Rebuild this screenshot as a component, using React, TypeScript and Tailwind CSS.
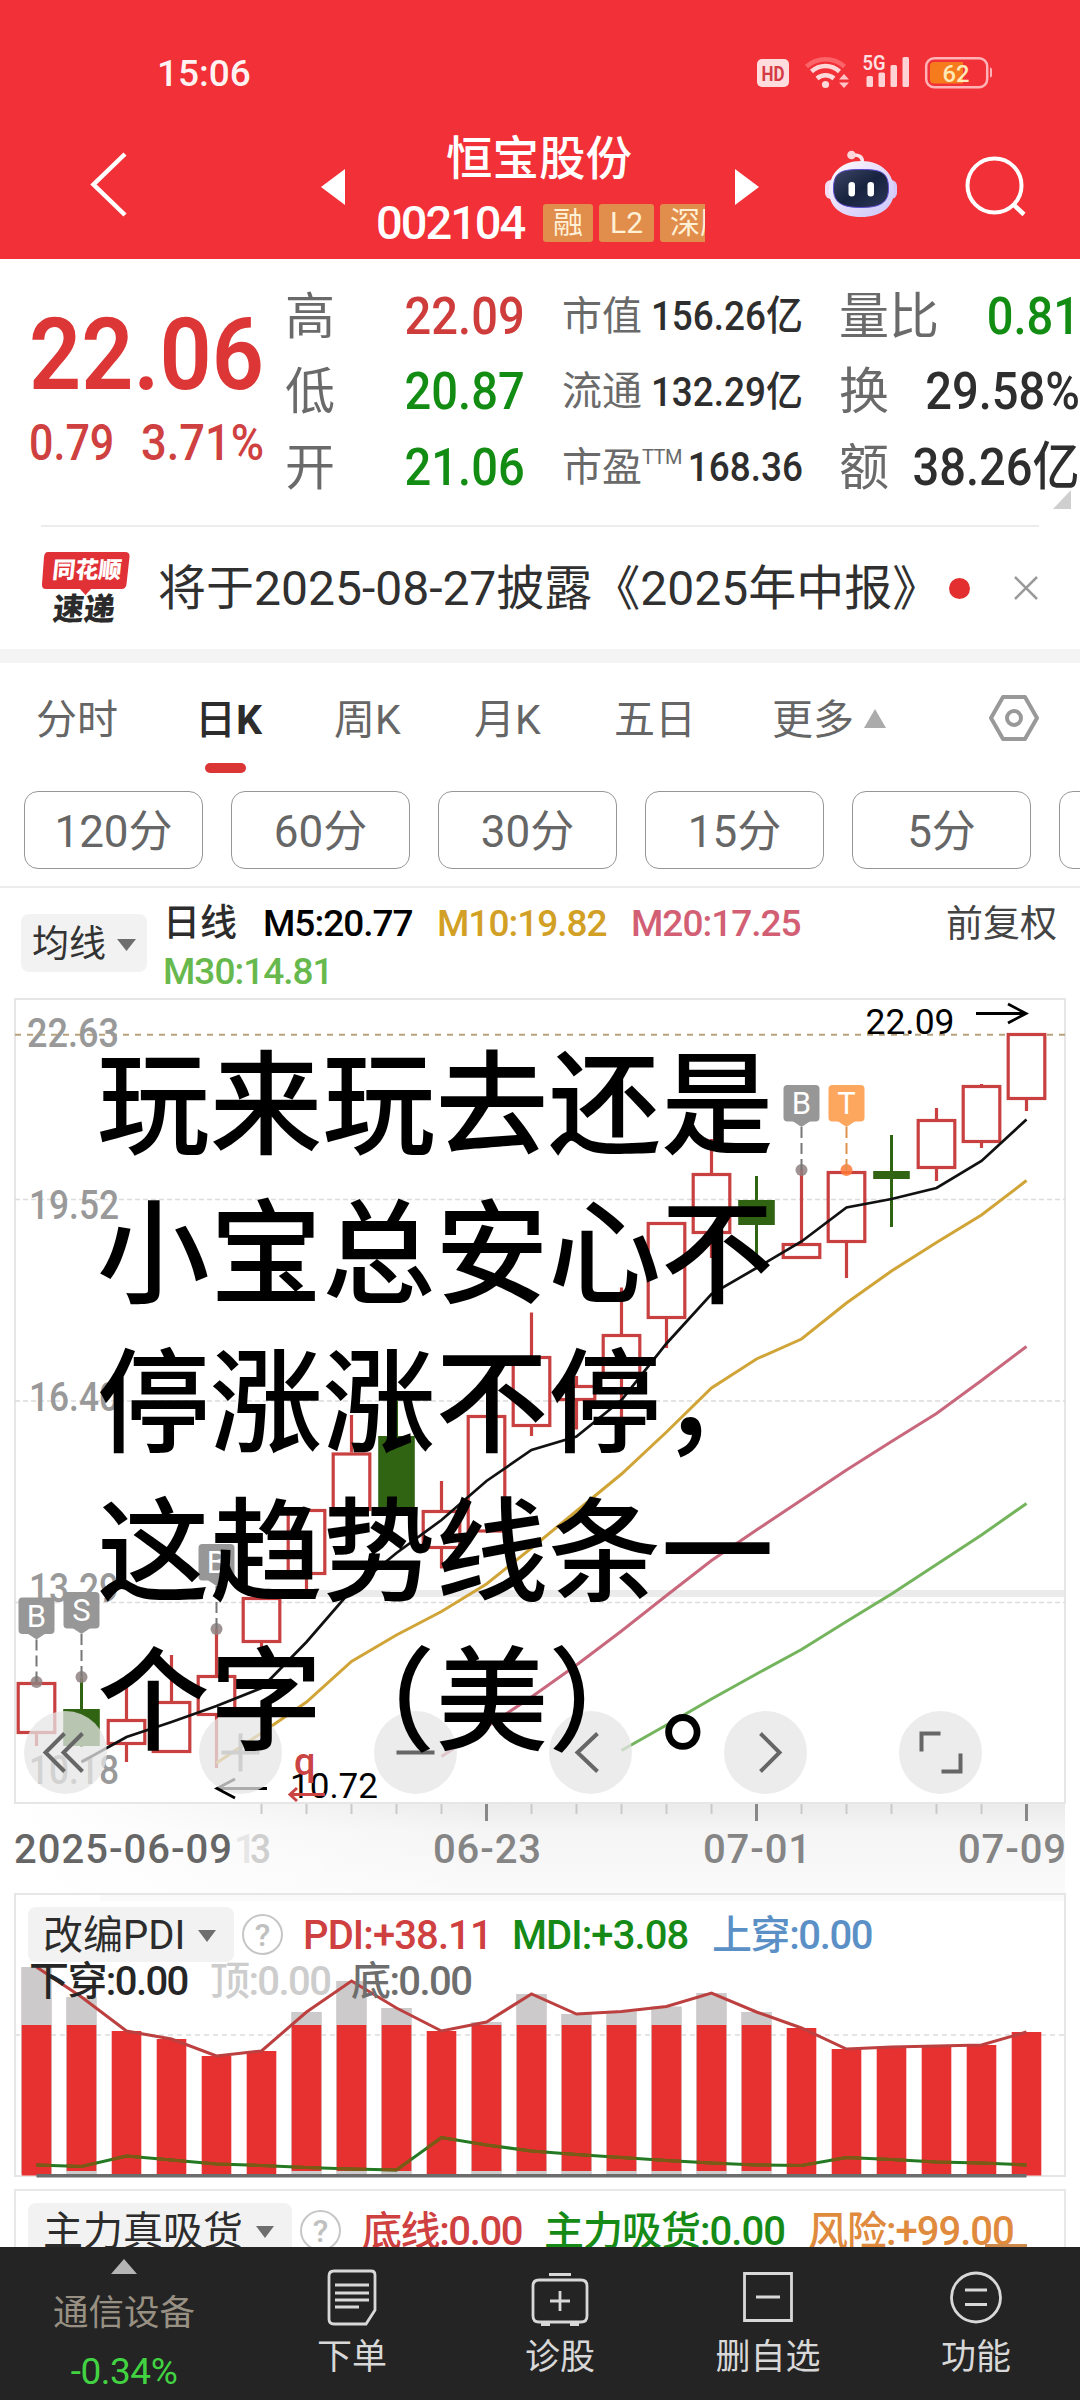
import type { ReactNode } from "react";

type Candle = { top: number; bottom: number; high: number; low: number; up: boolean };

const X0 = 36.5;
const STEP = 45;
const cx = (i: number) => X0 + i * STEP;

// [top, bottom, high, low, up]
const CANDLES: Candle[] = (
  [
    [1682, 1734, 1682, 1746, 1],
    [1709, 1746, 1677.5, 1747, 0],
    [1719, 1745, 1683, 1762, 1],
    [1701, 1753, 1655, 1753, 1],
    [1675, 1716, 1629, 1768, 1],
    [1597, 1643, 1597, 1650, 1],
    [1509, 1575, 1509, 1590, 1],
    [1452.5, 1511, 1415, 1511, 1],
    [1436, 1511, 1401, 1511, 0],
    [1510, 1549, 1481, 1568.5, 1],
    [1415, 1532.5, 1415, 1532.5, 1],
    [1356, 1427, 1312.5, 1436, 1],
    [1385, 1401, 1376, 1429.5, 1],
    [1334, 1378, 1287.5, 1417, 1],
    [1222, 1319, 1222, 1348, 1],
    [1173, 1234, 1139, 1258, 1],
    [1200, 1225, 1176, 1255, 0],
    [1243, 1259, 1169, 1259, 1],
    [1171, 1243, 1171, 1278, 1],
    [1171, 1179, 1135, 1227, 0],
    [1119, 1169, 1108, 1181, 1],
    [1085, 1143, 1084, 1148, 1],
    [1033, 1100, 1033, 1111, 1],
  ] as number[][]
).map(([top, bottom, high, low, up]) => ({ top, bottom, high, low, up: up === 1 }));

const MA5 = [1762, 1737, 1722, 1706, 1688, 1642, 1590, 1553, 1520, 1481, 1450, 1436.5, 1400, 1343.5, 1294, 1268, 1241.5, 1207.5, 1199, 1188, 1161, 1119.5];
const MA10 = [1763, 1733, 1702, 1661.5, 1635, 1611.5, 1584, 1548, 1511, 1474, 1432, 1388, 1359, 1339, 1303, 1271, 1242.5, 1215, 1180.5];
const MA20 = [1756.5, 1727, 1697, 1665, 1631, 1595.5, 1560.5, 1530, 1500, 1470, 1441.5, 1413.5, 1380.5, 1346.5];
const MA30 = [1750.5, 1725, 1699, 1674, 1649.5, 1621.5, 1594, 1564.5, 1535, 1503.5];

const PDI = [1967, 1997, 2031, 2039, 2056, 2051, 2012, 1981, 2008, 2031, 2022, 1994, 2014, 2011.5, 2006.5, 1993, 2012, 2028, 2049, 2047, 2046, 2045, 2032];
const MDI = [2165, 2166.5, 2156, 2160, 2164, 2165.5, 2167.5, 2169, 2170, 2137.5, 2145, 2151, 2154.5, 2157.5, 2160.5, 2163, 2165, 2165.5, 2157.5, 2159.5, 2162, 2163, 2165];
const PDI_CAP = 2025;

const line = (ys: number[], from = 0) => ys.map((y, i) => `${cx(i + from)},${y}`).join(" ");

const NOTE = ["玩来玩去还是", "小宝总安心不", "停涨涨不停，", "这趋势线条一", "个字（美）。"];

const QUOTES = [
  [
    { label: "高", value: "22.09", color: "text-[#cf3c3c]" },
    { label: "低", value: "20.87", color: "text-[#128c12]" },
    { label: "开", value: "21.06", color: "text-[#128c12]" },
  ],
  [
    { label: "量比", value: "0.81", color: "text-[#128c12]" },
    { label: "换", value: "29.58%", color: "text-[#2e2e2e]" },
    { label: "额", value: "38.26亿", color: "text-[#2e2e2e]" },
  ],
];

const CAPS = [
  { label: "市值", value: "156.26亿" },
  { label: "流通", value: "132.29亿" },
  { label: "市盈", value: "168.36", sup: "TTM" },
];

function StatusBar() {
  return (
    <div className="flex h-[116px] items-start pl-[157px]">
      <span className="mt-[55px] w-[600px] text-[37px] leading-none font-medium text-white/95">15:06</span>
      <svg className="mt-[50px]" width="240" height="44" viewBox="757 50 240 44">
        <rect x="757" y="59" width="32" height="28" rx="5" fill="#ffdcde" />
        <text x="761.5" y="81" fontSize="21" fontWeight="700" textLength="23" lengthAdjust="spacingAndGlyphs" fill="#d43a44">HD</text>
        <g fill="none" stroke="#ffd8da">
          <path d="M806.500 66.500a28.500 28.500 0 0 1 38 0" stroke="#fb6469" strokeWidth="4.500" />
          <path d="M811.500 70.500a20.500 20.500 0 0 1 28 0" strokeWidth="4.500" transform="translate(0 1)" />
          <path d="M817 78.500a13 13 0 0 1 17 0" strokeWidth="4.500" />
        </g>
        <circle cx="825.500" cy="84.500" r="3.600" fill="#ffd8da" />
        <path d="M839 79.500l5-5.500 5 5.500zM839 82.500l5 5.500 5-5.500z" fill="#ffc4c7" />
        <text x="862.500" y="70" fontSize="21" fontWeight="600" textLength="23" lengthAdjust="spacingAndGlyphs" fill="#ffe0e2">5G</text>
        <g fill="#ffd3d6">
          <rect x="866.500" y="76" width="6.500" height="11" rx="1.500" />
          <rect x="878.500" y="72.500" width="6.500" height="14.500" rx="1.500" />
          <rect x="890.500" y="65" width="6.500" height="22" rx="1.500" />
          <rect x="902.500" y="57" width="6.500" height="30" rx="1.500" />
        </g>
        <rect x="926.200" y="58.200" width="61" height="29" rx="8" fill="none" stroke="#ffb3b6" strokeWidth="2.500" />
        <path d="M934 62h29v21.500h-29q-4 0-4-4v-13.500q0-4 4-4z" fill="#f57b1d" />
        <path d="M990 67.500q2 0 2 2v6q0 2-2 2z" fill="#ffb3b6" />
        <text x="942.500" y="81.500" fontSize="24" fontWeight="500" textLength="27" lengthAdjust="spacingAndGlyphs" fill="#ffe9b8">62</text>
      </svg>
    </div>
  );
}

function Robot() {
  return (
    <svg width="74" height="70" viewBox="824 149 74 70">
      <defs>
        <linearGradient id="shell" x1="0" y1="0" x2="1" y2="1">
          <stop offset="0" stopColor="#ffffff" />
          <stop offset="0.5" stopColor="#e6dcfb" />
          <stop offset="1" stopColor="#c9c6fa" />
        </linearGradient>
        <linearGradient id="visor" x1="0" y1="0" x2="1" y2="1">
          <stop offset="0" stopColor="#3d4766" />
          <stop offset="0.500" stopColor="#18233f" />
          <stop offset="1" stopColor="#2c3658" />
        </linearGradient>
      </defs>
      <path d="M852 155q11-1 10.500 8" fill="none" stroke="#ffe3e8" strokeWidth="3.500" />
      <circle cx="851.500" cy="155" r="4.300" fill="#ffd6dc" />
      <rect x="825" y="180" width="12" height="19" rx="6" fill="#f6dcf0" />
      <rect x="885" y="180" width="12" height="19" rx="6" fill="#d6c8f8" />
      <path d="M861 161c21 0 33 13 33 30 0 16-13 26-33 26s-32-10-32-26c0-17 12-30 32-30z" fill="url(#shell)" />
      <path d="M861 169.500c19 0 27.500 2 27.500 19 0 14-8 19-27.500 19s-27.500-5-27.500-19c0-17 8.500-19 27.500-19z" fill="url(#visor)" stroke="#5b4bd0" strokeWidth="1" />
      <rect x="848.500" y="182" width="6.500" height="14.500" rx="3.200" fill="#fff" />
      <rect x="867.500" y="182" width="6.500" height="14.500" rx="3.200" fill="#fff" />
    </svg>
  );
}

function Tag({ children }: { children: ReactNode }) {
  return (
    <span className="flex h-[38px] shrink-0 items-center justify-center rounded-[3px] bg-[#e18d4c] px-[10px] text-[30px] leading-none text-[#fff0d6]">
      {children}
    </span>
  );
}

function Header() {
  return (
    <header className="h-[259px] bg-[#f23037]">
      <StatusBar />
      <div className="flex h-[142px] items-start">
        <svg className="mt-[34px] ml-[87px]" width="44" height="70" viewBox="86 150 44 70">
          <path d="M124 154L92.500 184.500 124 215" fill="none" stroke="#fff" strokeWidth="4.500" />
        </svg>
        <svg className="mt-[53px] ml-[190px]" width="24" height="36" viewBox="0 0 24 36">
          <path d="M24 0v36L0 18z" fill="#fff" />
        </svg>
        <div className="ml-[31px] w-[330px]">
          <div className="mt-[20px] ml-[70px] text-[46.500px] leading-none font-medium text-white">恒宝股份</div>
          <div className="mt-[18px] flex h-[44px] items-center">
            <span className="w-[167px] text-[47px] leading-none font-medium tracking-[-2px] text-white">002104</span>
            <div className="flex w-[162px] gap-[6px] overflow-hidden">
              <Tag>融</Tag>
              <Tag>
                <span className="px-[1px]">L2</span>
              </Tag>
              <Tag>深股通</Tag>
            </div>
          </div>
        </div>
        <svg className="mt-[53px] ml-[29px]" width="24" height="36" viewBox="0 0 24 36">
          <path d="M0 0v36l24-18z" fill="#fff" />
        </svg>
        <div className="mt-[33px] ml-[65px]">
          <Robot />
        </div>
        <svg className="mt-[38px] ml-[65px]" width="66" height="66" viewBox="963 154 66 66">
          <circle cx="994.500" cy="185.500" r="27" fill="none" stroke="#fff" strokeWidth="4" />
          <path d="M1013 204l11 10.500" stroke="#fff" strokeWidth="4.500" />
        </svg>
      </div>
    </header>
  );
}

function QuoteColumn({ rows, className }: { rows: typeof QUOTES[number]; className: string }) {
  return (
    <div className={className}>
      {rows.map(r => (
        <div key={r.label} className="flex h-[75.500px] items-center justify-between whitespace-nowrap">
          <span className="text-[50px] leading-none text-[#6a6a6a]">{r.label}</span>
          <span className={`origin-right scale-x-[0.905] text-[52px] leading-none font-medium ${r.color}`}>{r.value}</span>
        </div>
      ))}
    </div>
  );
}

function Quote() {
  return (
    <section className="relative flex h-[266px] pt-[20px]">
      <div className="w-[285px] pl-[29px] text-[#dc3636]">
        <div className="mt-[25px] w-[256px] origin-left scale-x-[0.905] text-[101px] leading-none font-semibold">22.06</div>
        <div className="mt-[13px] flex text-[50px] leading-none font-medium whitespace-nowrap text-[#cf4040]">
          <span className="w-[112px] origin-left scale-x-[0.86]">0.79</span>
          <span className="origin-left scale-x-[0.905]">3.71%</span>
        </div>
      </div>
      <QuoteColumn rows={QUOTES[0]} className="w-[240px]" />
      <div className="ml-[37px] w-[241px]">
        {CAPS.map(c => (
          <div key={c.label} className="flex h-[75.500px] items-center justify-between whitespace-nowrap">
            <span className="w-[60px] text-[40px] leading-none text-[#6a6a6a]">
              {c.label}
              {c.sup && <span className="relative -top-[17px] text-[20px] tracking-[-0.500px]">{c.sup}</span>}
            </span>
            <span className="origin-right scale-x-[0.9] text-[41px] leading-none font-medium text-[#2e2e2e]">{c.value}</span>
          </div>
        ))}
      </div>
      <QuoteColumn rows={QUOTES[1]} className="ml-[36px] w-[241px]" />
      <svg className="absolute right-[9px] bottom-[16px]" width="18" height="19" viewBox="0 0 18 19">
        <path d="M18 0v19H0z" fill="#cfcfcf" />
      </svg>
    </section>
  );
}

function News() {
  return (
    <section className="mx-[41px] flex h-[124px] items-center border-t-2 border-[#ececec]">
      <div className="relative h-[76px] w-[89px]">
        <svg className="absolute inset-0" width="89" height="76" viewBox="41 549 89 76">
          <path d="M48 551h77q5 0 4.500 5l-3 27q-.500 5-5 5H91l-5.500 6-5.500-6H46q-4.500 0-4-5l2-27q.500-5 4-5z" fill="#e03236" />
        </svg>
        <div className="relative -skew-x-6 pt-[9px] pl-[12px] text-[23px] leading-none font-black text-white">同花顺</div>
        <div className="relative mt-[12px] ml-[12px] -skew-x-6 text-[31px] leading-none font-black whitespace-nowrap text-[#2b2b2b]">速递</div>
      </div>
      <span className="mt-[2px] ml-[28px] text-[48px] leading-none whitespace-nowrap text-[#303030]">将于2025-08-27披露《2025年中报》</span>
      <span className="mt-[1px] ml-[9px] size-[21px] shrink-0 rounded-full bg-[#e32f2f]" />
      <svg className="ml-auto" width="26" height="26" viewBox="0 0 26 26">
        <path d="M2 2l22 22M24 2L2 24" stroke="#9a9a9a" strokeWidth="2.500" />
      </svg>
    </section>
  );
}

function Tabs() {
  return (
    <>
      <nav className="flex h-[128px] pt-[37px] text-[41px] leading-none whitespace-nowrap text-[#666]">
        <span className="ml-[36px] w-[159px]">分时</span>
        <span className="flex w-[139px] flex-col font-medium text-[#2c2c2c]">
          <span>
            日<b>K</b>
          </span>
          <i className="mt-[22px] ml-[10px] h-[10px] w-[41px] rounded-full bg-[#dc3535]" />
        </span>
        <span className="w-[140px]">周K</span>
        <span className="w-[140px]">月K</span>
        <span className="w-[158px]">五日</span>
        <span>更多</span>
        <svg className="mt-[9px] ml-[10px]" width="22" height="19" viewBox="0 0 22 19">
          <path d="M11 0l11 19H0z" fill="#ababab" />
        </svg>
        <svg className="-mt-[6px] ml-auto mr-[41px]" width="50" height="48" viewBox="989 694 50 48">
          <path d="M1003 697h22l12 21-12 21h-22l-12-21z" fill="none" stroke="#999" strokeWidth="4" strokeLinejoin="round" />
          <circle cx="1014" cy="718" r="7" fill="none" stroke="#999" strokeWidth="4" />
        </svg>
      </nav>
      <div className="flex h-[97px] gap-[28px] overflow-hidden border-b-2 border-[#ececec] pl-[24px]">
        {["120分", "60分", "30分", "15分", "5分", "1分"].map(t => (
          <button key={t} className="h-[78px] w-[179px] shrink-0 rounded-[14px] border-[1.500px] border-[#969696] pt-[3px] text-[44px] leading-none text-[#666]">
            {t}
          </button>
        ))}
      </div>
    </>
  );
}

function Legend() {
  return (
    <div className="flex h-[111px] pl-[21px] text-[37px] leading-none">
      <button className="mt-[26px] flex h-[58px] w-[126px] items-center gap-[11px] rounded-[8px] bg-[#f2f2f2] pt-[3px] pl-[11px] leading-none text-[#333]">
        均线
        <svg width="19" height="12" viewBox="0 0 19 12">
          <path d="M0 0h19l-9.500 12z" fill="#6e6e6e" />
        </svg>
      </button>
      <div className="mt-[17px] ml-[16px] flex w-[760px] flex-wrap content-start gap-y-[11px] font-medium tracking-[-1px]">
        <span className="w-[100px] tracking-normal text-[#2c2c2c]">日线</span>
        <span className="w-[174px] text-black">M5:20.77</span>
        <span className="w-[194px] text-[#d2a024]">M10:19.82</span>
        <span className="w-[260px] text-[#d35f75]">M20:17.25</span>
        <span className="text-[#67b94d]">M30:14.81</span>
      </div>
      <span className="mt-[18px] ml-[23px] text-[#444]">前复权</span>
    </div>
  );
}

function Marker({ i, y, dot, label, color = "#979797", dotColor = "#8f8080" }: { i: number; y: number; dot: number; label: string; color?: string; dotColor?: string }) {
  const x = cx(i);
  return (
    <g>
      <circle cx={x} cy={dot} r="6" fill={dotColor} opacity="0.85" />
      <path d={`M${x} ${y + 42}V${dot}`} stroke={color === "#979797" ? "#777" : "#e0924c"} strokeWidth="2" strokeDasharray="11 5" />
      <rect x={x - 18} y={y} width="36" height="36.500" rx="4" fill={color} />
      <path d={`M${x - 9} ${y + 36}h18l-9 6z`} fill={color} />
      <text x={x} y={y + 29} fontSize="31" textAnchor="middle" fill="#fff">{label}</text>
    </g>
  );
}

function Price({ y, children }: { y: number; children: string }) {
  // a leading 1 carries more side bearing
  const narrow = children.startsWith("1");
  return (
    <text x={narrow ? 29 : 27} y={y} fontSize="40" fontWeight="500" textLength={narrow ? 90 : 92} lengthAdjust="spacingAndGlyphs" fill="#999">
      {children}
    </text>
  );
}

function PriceChart() {
  return (
    <svg className="block" width="1080" height="895" viewBox="0 998 1080 895">
      <defs>
        <linearGradient id="stripV" x1="0" y1="0" x2="0" y2="1">
          <stop offset="0" stopColor="#ebebeb" />
          <stop offset="0.300" stopColor="#f5f5f5" />
          <stop offset="1" stopColor="#fafafa" />
        </linearGradient>
        <linearGradient id="stripH" x1="0" y1="0" x2="1" y2="0">
          <stop offset="0" stopColor="#fff" />
          <stop offset="0.060" stopColor="#fff" stopOpacity="0.900" />
          <stop offset="0.450" stopColor="#fff" stopOpacity="0" />
        </linearGradient>
      </defs>
      <rect x="15" y="1804" width="1050" height="89" fill="url(#stripV)" />
      <rect x="14" y="1804" width="1052" height="89" fill="url(#stripH)" />
      <rect x="300" y="1590" width="765" height="7" fill="#ebebeb" />
      <rect x="15" y="999" width="1050" height="804" fill="none" stroke="#e6e6e6" strokeWidth="2" />
      <path d="M15 1199.500H1065M15 1401H1065M15 1602.500H1065" stroke="#dcdcdc" strokeWidth="1.500" strokeDasharray="5 3" />
      <path d="M15 1034.700H1065" stroke="#b8a27e" strokeWidth="2" strokeDasharray="6 6" />

      <Price y={1047}>22.63</Price>
      <Price y={1219}>19.52</Price>
      <Price y={1411}>16.40</Price>
      <Price y={1602}>13.29</Price>
      <Price y={1784}>10.18</Price>

      {CANDLES.map((c, i) =>
        c.up ? (
          <g key={i} stroke="#c94040" strokeWidth="3.200" fill="none">
            <path d={`M${cx(i)} ${c.high}V${c.top}M${cx(i)} ${c.bottom}V${c.low}`} />
            <rect x={cx(i) - 18.3} y={c.top + 1.5} width="36.600" height={c.bottom - c.top - 3} />
          </g>
        ) : (
          <g key={i} fill="#306412">
            <rect x={cx(i) - 1.5} y={c.high} width="3" height={c.low - c.high} />
            <rect x={cx(i) - 18.3} y={c.top} width="36.600" height={c.bottom - c.top} />
          </g>
        )
      )}

      <g fill="none" strokeWidth="3">
        <polyline points={line(MA30, 13)} stroke="#74b45c" />
        <polyline points={line(MA20, 9)} stroke="#c9677c" />
        <polyline points={line(MA10, 4)} stroke="#d0a436" />
        <polyline points={line(MA5, 1)} stroke="#111" strokeWidth="2.700" />
      </g>

      <Marker i={0} y={1597.500} dot={1682} label="B" />
      <Marker i={1} y={1592} dot={1677} label="S" />
      <Marker i={4} y={1544} dot={1629} label="B" />
      <Marker i={17} y={1085} dot={1170} label="B" />
      <Marker i={18} y={1085} dot={1170} label="T" color="#fda65e" dotColor="#ff7a38" />

      <text x="865.500" y="1034" fontSize="35" textLength="89" lengthAdjust="spacingAndGlyphs">22.09</text>
      <path d="M976 1013.500h50M1008 1004l18 9.500-18 9.500" fill="none" stroke="#000" strokeWidth="2.800" />
      <text x="290" y="1797.500" fontSize="35" textLength="88" lengthAdjust="spacingAndGlyphs">10.72</text>
      <path d="M267 1788.500h-50M235 1779l-18 9.500 18 9.500" fill="none" stroke="#000" strokeWidth="2.800" />
      <text x="294" y="1775" fontSize="38" fontWeight="500" fill="#cb4444">q</text>
      <path d="M325 1794.500h-35M297 1788l-7 6.500 7 6.500" fill="none" stroke="#cb4444" strokeWidth="3" />

      {Array.from({ length: 18 }, (_, k) => k + 5).map(i => {
        const major = i === 10 || i === 16 || i === 22;
        return (
          <rect key={i} x={cx(i) - (major ? 1.5 : 1)} y="1804" width={major ? 3 : 2} height={major ? 17 : 10} fill={major ? "#888" : "#c9c9c9"} />
        );
      })}
      <g fontSize="40" fontWeight="500">
        <text x="14" y="1863" textLength="218" fill="#666">2025-06-09</text>
        <text x="234" y="1863" textLength="17" fill="#e6e6e6">1</text>
        <text x="250" y="1863" textLength="21" lengthAdjust="spacingAndGlyphs" fill="#cfcfcf">3</text>
        <text x="433" y="1863" textLength="108" fill="#858585">06-23</text>
        <text x="703" y="1863" textLength="108" fill="#858585">07-01</text>
        <text x="958" y="1863" textLength="108" fill="#858585">07-09</text>
      </g>
    </svg>
  );
}

const CONTROLS = [
  { name: "first", d: "M-1 -19L-20 0-1 19M17 -19L-2 0 17 19" },
  { name: "zoom-in", d: "M-19 0h38M0 -19v38", faint: true },
  { name: "zoom-out", d: "M-19 0h38" },
  { name: "prev", d: "M7 -19L-13 0 7 19" },
  { name: "next", d: "M-5 -19L14 0-5 19" },
  { name: "full", d: "M-19 -1v-18h19M20 1v18h-19" },
];

function Controls() {
  return (
    <div className="absolute top-[713px] left-[24px] flex gap-[92px]">
      {CONTROLS.map(c => (
        <button key={c.name} className="size-[83px] rounded-full bg-[#e6e6e6]/75">
          <svg width="83" height="83" viewBox="-41.5 -41.5 83 83">
            <path d={c.d} fill="none" stroke={c.faint ? "#cfcfcf" : "#666"} strokeWidth="4" />
          </svg>
        </button>
      ))}
    </div>
  );
}

function IndicatorButton({ children, className }: { children: ReactNode; className: string }) {
  return (
    <>
      <button className={`flex h-[55px] shrink-0 items-center rounded-[8px] bg-[#f2f2f2] pt-[3px] pl-[15px] text-[40px] leading-none font-normal whitespace-nowrap text-[#2c2c2c] ${className}`}>
        {children}
        <svg className="ml-[13px]" width="18" height="12" viewBox="0 0 18 12">
          <path d="M0 0h18l-9 12z" fill="#6e6e6e" />
        </svg>
      </button>
      <span className="ml-[8px] flex size-[41px] shrink-0 items-center justify-center rounded-full border-[2.500px] border-[#c6c6c6] text-[32px] leading-none text-[#c0c0c0]">
        ?
      </span>
    </>
  );
}

function PdiPanel() {
  return (
    <section className="relative h-[283px]">
      <svg className="absolute inset-0" width="1080" height="290" viewBox="0 1893 1080 290">
        <defs>
          <clipPath id="bars">
            {PDI.map((y, i) => (
              <rect key={i} x={cx(i) - 15} y={Math.max(y, PDI_CAP)} width="30" height={2176 - Math.max(y, PDI_CAP)} />
            ))}
          </clipPath>
        </defs>
        <rect x="15" y="1894" width="1050" height="282" fill="none" stroke="#e6e6e6" strokeWidth="2" />
        <rect x="100" y="1895" width="964" height="6" fill="#fafafa" />
        <path d="M15 2035H1065" stroke="#e4e4e4" strokeWidth="2" strokeDasharray="5 4" />
        {PDI.map((y, i) => (
          <g key={i}>
            {y < PDI_CAP && <rect x={cx(i) - 15.3} y={y} width="30.600" height={2174 - y} fill="#cccaca" />}
            <rect x={cx(i) - 14.8} y={Math.max(y, PDI_CAP)} width="29.600" height={(y < PDI_CAP && i > 0 ? 2171 : 2175.5) - Math.max(y, PDI_CAP)} fill="#e73030" />
          </g>
        ))}
        <polyline points={line(PDI)} fill="none" stroke="#bc4040" strokeWidth="3" />
        <polyline points={line(MDI)} fill="none" stroke="#237a23" strokeWidth="3" />
        <polyline points={line(MDI)} fill="none" stroke="#7d5a14" strokeWidth="3" clipPath="url(#bars)" />
        <rect x={X0} y="2174" width="990" height="3.500" fill="#6c6c6c" />
      </svg>
      <div className="relative flex items-center pt-[14px] pl-[28px] text-[40px] leading-none font-medium whitespace-nowrap">
        <IndicatorButton className="w-[206px]">改编PDI</IndicatorButton>
        <span className="mt-[3px] ml-[20px] w-[209px] tracking-[-0.900px] text-[#cf4040]">PDI:+38.11</span>
        <span className="mt-[3px] w-[200px] tracking-[-0.900px] text-[#168a16]">MDI:+3.08</span>
        <span className="mt-[3px] tracking-[-1.400px] text-[#5b90c6]">上穿:0.00</span>
      </div>
      <div className="relative flex pl-[29px] text-[40px] leading-none font-medium tracking-[-1.600px] whitespace-nowrap">
        <span className="w-[181px] text-[#262626]">下穿:0.00</span>
        <span className="w-[141px] text-[#cdcdcd]">顶:0.00</span>
        <span className="text-[#6e6e6e]">底:0.00</span>
      </div>
    </section>
  );
}

function ForcePanel() {
  return (
    <section className="relative mx-[14px] mt-[13px] h-[58px] overflow-hidden border-2 border-b-0 border-[#e8e8e8]">
      <div className="flex items-center pt-[12px] pl-[12px] text-[40px] leading-none font-medium whitespace-nowrap">
        <IndicatorButton className="w-[264px]">主力真吸货</IndicatorButton>
        <span className="mt-[3px] ml-[21px] w-[182px] tracking-[-1.400px] text-[#cf4040]">底线:0.00</span>
        <span className="mt-[3px] w-[264px] tracking-[-1px] text-[#168a16]">主力吸货:0.00</span>
        <span className="mt-[3px] tracking-[-1px] text-[#e08a3e]">风险:+99.00</span>
      </div>
      <i className="absolute right-[37px] bottom-0 h-[3px] w-[42px] bg-[#d08a4c]" />
    </section>
  );
}

const ACTIONS = [
  {
    label: "下单",
    icon: (
      <>
        <path d="M-18 -27h37q4 0 4 4v35l-9 14h-32q-5 0-5-5v-43q0-5 5-5z" />
        <path d="M-17 -13h34M-17 -5h34M-17 2h34M-17 9h24" />
      </>
    ),
  },
  {
    label: "诊股",
    icon: (
      <>
        <path d="M-11 -23.500h22M-21 -18h42q6 0 6 6v30q0 6-6 6h-42q-6 0-6-6v-30q0-6 6-6zM0 -7v20M-10 3h20" />
        <path d="M-19 26h9M10 26h9" strokeWidth="4" />
      </>
    ),
  },
  { label: "删自选", icon: <path d="M-23.500 -24.500h47v47h-47zM-12 -1h24" /> },
  {
    label: "功能",
    icon: (
      <>
        <circle cx="0" cy="-0.500" r="24.500" />
        <path d="M-11 -8h22M-11 6.500h22" />
      </>
    ),
  },
];

function BottomBar() {
  return (
    <footer className="flex h-[153px] bg-[#242424] leading-none">
      <div className="flex w-[248px] flex-col items-center pt-[12px]">
        <svg width="26" height="15" viewBox="0 0 26 15">
          <path d="M13 0l13 15H0z" fill="#b5b5b5" />
        </svg>
        <span className="mt-[22px] text-[35.500px] text-[#989183]">通信设备</span>
        <span className="mt-[21px] text-[37px] tracking-[-0.500px] text-[#42d342]">-0.34%</span>
      </div>
      {ACTIONS.map(a => (
        <div key={a.label} className="flex w-[208px] flex-col items-center pt-[21px]">
          <svg width="62" height="60" viewBox="-31 -30 62 60" fill="none" stroke="#d8d8d8" strokeWidth="2.800">
            {a.icon}
          </svg>
          <span className="mt-[12px] text-[35px] text-[#d8d8d8]">{a.label}</span>
        </div>
      ))}
    </footer>
  );
}

export default function App() {
  return (
    <div className="h-[2400px] w-[1080px] overflow-hidden bg-white font-['Roboto','Noto_Sans_CJK_SC',sans-serif]">
      <Header />
      <Quote />
      <News />
      <div className="h-[14px] bg-[#f4f4f4]" />
      <Tabs />
      <Legend />
      <div className="relative -mt-[1px]">
        <PriceChart />
        <Controls />
        <div className="absolute top-[34px] left-[97px] text-[112.800px] leading-[149px] font-medium whitespace-nowrap text-black [text-spacing-trim:space-all]">
          {NOTE.map(t => (
            <div key={t}>{t}</div>
          ))}
        </div>
      </div>
      <PdiPanel />
      <ForcePanel />
      <BottomBar />
    </div>
  );
}
